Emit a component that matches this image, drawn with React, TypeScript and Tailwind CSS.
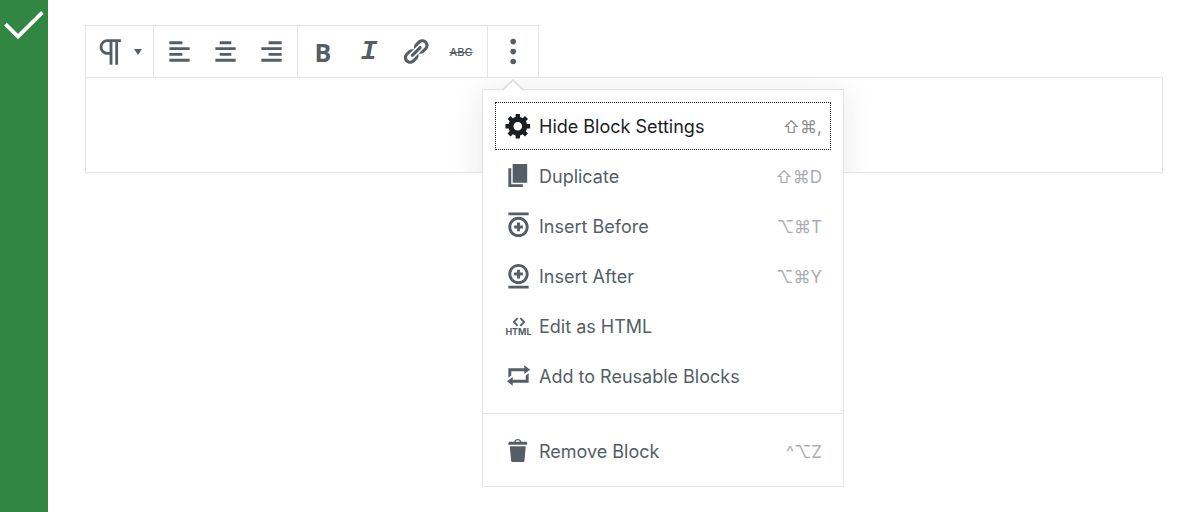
import React from "react";

function Dashicon({ d }: { d: string }) {
  return (
    <svg viewBox="0 0 20 20" aria-hidden="true" className="size-[29px] shrink-0 fill-current">
      <path d={d} />
    </svg>
  );
}

const alignments = [
  { label: "Align left", d: "M12 5V3H3v2h9zm5 4V7H3v2h14zm-5 4v-2H3v2h9zm5 4v-2H3v2h14z" },
  { label: "Align center", d: "M14 5V3H6v2h8zm3 4V7H3v2h14zm-3 4v-2H6v2h8zm3 4v-2H3v2h14z" },
  { label: "Align right", d: "M17 5V3H8v2h9zm0 4V7H3v2h14zm0 4v-2H8v2h9zm0 4v-2H3v2h14z" },
];

const linkPath =
  "M17.74 2.76c1.68 1.69 1.68 4.41 0 6.1l-1.53 1.52c-1.12 1.12-2.7 1.47-4.14 1.09l2.62-2.61.76-.77.76-.76c.84-.84.84-2.2 0-3.04-.84-.85-2.2-.85-3.04 0l-.77.76-3.38 3.38c-.37-1.44-.02-3.02 1.1-4.14l1.52-1.53c1.69-1.68 4.42-1.68 6.1 0zM8.59 13.43l5.34-5.34c.42-.42.42-1.1 0-1.52-.44-.43-1.13-.39-1.53 0l-5.33 5.34c-.42.42-.42 1.1 0 1.52.44.43 1.13.39 1.52 0zm-.76 2.29l4.14-4.15c.38 1.44.03 3.02-1.09 4.14l-1.52 1.53c-1.69 1.68-4.41 1.68-6.1 0-1.68-1.68-1.68-4.42 0-6.1l1.53-1.52c1.12-1.12 2.7-1.47 4.14-1.1l-4.14 4.15c-.85.84-.85 2.2 0 3.05.84.84 2.2.84 3.04 0z";

function HtmlIcon() {
  return (
    <span aria-hidden="true" className="flex size-[29px] shrink-0 flex-col items-center">
      <svg viewBox="0 0 14 10" className="mt-1.5 h-2.5 w-3.5 shrink-0 fill-none stroke-current" strokeWidth="1.8">
        <path d="M5.6 1.2 1.9 5l3.7 3.8M8.4 1.2 12.1 5 8.4 8.8" />
      </svg>
      <span className="text-[9px] leading-[10px] font-bold">HTML</span>
    </span>
  );
}

const items = [
  {
    label: "Hide Block Settings",
    keys: "⇧⌘,",
    active: true,
    icon: (
      <Dashicon d="M18 12h-2.18c-.17.7-.44 1.35-.81 1.93l1.54 1.54-2.1 2.1-1.54-1.54c-.58.36-1.23.63-1.91.79V19H8v-2.18c-.68-.16-1.33-.43-1.91-.79l-1.54 1.54-2.12-2.12 1.54-1.54c-.36-.58-.63-1.23-.79-1.91H1V9.03h2.17c.16-.7.44-1.35.8-1.94L2.43 5.55l2.1-2.1 1.54 1.54c.58-.37 1.24-.64 1.93-.81V2h3v2.18c.68.16 1.33.43 1.91.79l1.54-1.54 2.12 2.12-1.54 1.54c.36.59.64 1.24.8 1.94H18V12zm-8.5 1.5c1.66 0 3-1.34 3-3s-1.34-3-3-3-3 1.34-3 3 1.34 3 3 3z" />
    ),
  },
  { label: "Duplicate", keys: "⇧⌘D", icon: <Dashicon d="M6 15V2h10v13H6zm-1 1h8v2H3V5h2v11z" /> },
  {
    label: "Insert Before",
    keys: "⌥⌘T",
    icon: (
      <Dashicon d="M11 8H9v2H7v2h2v2h2v-2h2v-2h-2V8zm-1-4c-3.9 0-7 3.1-7 7s3.1 7 7 7 7-3.1 7-7-3.1-7-7-7zm0 12c-2.8 0-5-2.2-5-5s2.2-5 5-5 5 2.2 5 5-2.2 5-5 5zM3 1h14v2H3V1z" />
    ),
  },
  {
    label: "Insert After",
    keys: "⌥⌘Y",
    icon: (
      <Dashicon d="M9 12h2v-2h2V8h-2V6H9v2H7v2h2v2zm1 4c3.9 0 7-3.1 7-7s-3.1-7-7-7-7 3.1-7 7 3.1 7 7 7zm0-12c2.8 0 5 2.2 5 5s-2.2 5-5 5-5-2.2-5-5 2.2-5 5-5zM3 17h14v2H3v-2z" />
    ),
  },
  { label: "Edit as HTML", keys: "", icon: <HtmlIcon /> },
  {
    label: "Add to Reusable Blocks",
    keys: "",
    icon: <Dashicon d="M5 7v3l-2 1.5V5h11V3l4 3.01L14 9V7H5zm10 6v-3l2-1.5V15H6v2l-4-3.01L6 11v2h9z" />,
  },
];

const removeItem = {
  label: "Remove Block",
  keys: "^⌥Z",
  icon: (
    <Dashicon d="M12 4h3c.6 0 1 .4 1 1v1H3V5c0-.6.5-1 1-1h3c.2-1.1 1.3-2 2.5-2s2.3.9 2.5 2zM8 4h3c-.2-.6-.9-1-1.5-1S8.2 3.4 8 4zM4 7h11l-.9 10.1c0 .5-.5.9-1 .9H5.9c-.5 0-.9-.4-1-.9L4 7z" />
  ),
};

type Item = { label: string; keys: string; active?: boolean; icon: React.ReactNode };

function MenuItem({ label, keys, active, icon }: Item) {
  return (
    <button
      role="menuitem"
      className={`flex h-12 w-full items-center border border-dotted px-2 text-left text-[18px] leading-6 ${
        active ? "border-[#191e23] text-[#191e23]" : "border-transparent text-[#555d66]"
      }`}
    >
      <span className="pb-px">{icon}</span>
      <span className="ml-1.5 grow pt-0.5">{label}</span>
      {keys && <span className={`pt-0.5 text-[17px] ${active ? "text-[#8c8f91]" : "text-[#aaaeb2]"}`}>{keys}</span>}
    </button>
  );
}

function ToolButton({ label, children }: { label: string; children: React.ReactNode }) {
  return (
    <button aria-label={label} className="flex h-[51px] w-[46px] items-center justify-center">
      {children}
    </button>
  );
}

function MoreMenu() {
  return (
    <div role="menu" className="absolute top-[63px] -left-1.5 z-10 w-[362px] border border-[#e2e4e7] bg-white">
      <svg viewBox="0 0 22 12" aria-hidden="true" className="absolute -top-[11px] left-[19px] h-3 w-[22px]">
        <path d="M0 12 11 1l11 11z" fill="#fff" />
        <path d="M0 11.5 11 1l11 10.5" fill="none" stroke="#dcdfe2" strokeWidth="1.8" />
      </svg>
      <div className="flex flex-col gap-0.5 px-3 pt-3 pb-[13px]">
        {items.map((item) => (
          <MenuItem key={item.label} {...item} />
        ))}
      </div>
      <div className="border-t border-[#e2e4e7] px-3 pt-[13px] pb-[11px]">
        <MenuItem {...removeItem} />
      </div>
    </div>
  );
}

export default function App() {
  return (
    <div className="flex min-h-screen bg-white font-['Inter','DejaVu_Sans',sans-serif] text-[#555d66]">
      <aside className="w-12 shrink-0 bg-[#318642]">
        <svg viewBox="0 0 48 48" role="img" aria-label="Correct" className="size-12 fill-none stroke-white" strokeWidth="3.8">
          <path d="M5.5 24.2 18 36.6 42.4 12.4" />
        </svg>
      </aside>
      <main className="grow px-[37px] pt-[25px]">
        <div role="toolbar" aria-label="Block tools" className="relative z-10 flex w-fit border border-[#e2e4e7] bg-white">
          <div className="border-r border-[#e2e4e7]">
            <button aria-label="Change block type" className="flex h-[51px] w-[67px] items-center pl-2">
              <svg viewBox="0 0 24 24" aria-hidden="true" className="size-[34px] fill-current">
                <path d="M11 5v7H9.5C7.6 12 6 10.4 6 8.5S7.6 5 9.5 5H11m8-2H9.5C6.5 3 4 5.5 4 8.5S6.5 14 9.5 14H11v7h2V5h2v16h2V5h2V3z" />
              </svg>
              <svg viewBox="0 0 8 6" aria-hidden="true" className="ml-1.5 h-1.5 w-2 fill-current">
                <path d="M0 0h8L4 6z" />
              </svg>
            </button>
          </div>
          <div className="flex border-r border-[#e2e4e7] pr-[3px] pl-0.5">
            {alignments.map((a) => (
              <ToolButton key={a.label} label={a.label}>
                <Dashicon d={a.d} />
              </ToolButton>
            ))}
          </div>
          <div className="flex border-r border-[#e2e4e7] pr-[3px] pl-0.5">
            <ToolButton label="Bold">
              <span className="font-['Open_Sans',sans-serif] text-[25px] leading-8 font-bold">B</span>
            </ToolButton>
            <ToolButton label="Italic">
              <span className="font-['Liberation_Mono',monospace] text-[28px] leading-8 font-bold italic">I</span>
            </ToolButton>
            <ToolButton label="Link">
              <Dashicon d={linkPath} />
            </ToolButton>
            <ToolButton label="Strikethrough">
              <span className="text-[11px] leading-4 font-medium line-through">ABC</span>
            </ToolButton>
          </div>
          <div className="relative px-0.5">
            <ToolButton label="More options">
              <svg viewBox="0 0 29 29" aria-hidden="true" className="size-[29px] fill-current">
                <circle cx="14.2" cy="4.6" r="2.8" />
                <circle cx="14.2" cy="14.6" r="2.8" />
                <circle cx="14.2" cy="24.5" r="2.8" />
              </svg>
            </ToolButton>
            <MoreMenu />
          </div>
        </div>
        <div className="relative -mt-px h-24 overflow-hidden border border-[#e2e4e7]">
          <div className="absolute top-3 left-[396px] h-[397px] w-[362px] shadow-[0_3px_30px_rgba(25,30,35,0.1)]" />
        </div>
      </main>
    </div>
  );
}
